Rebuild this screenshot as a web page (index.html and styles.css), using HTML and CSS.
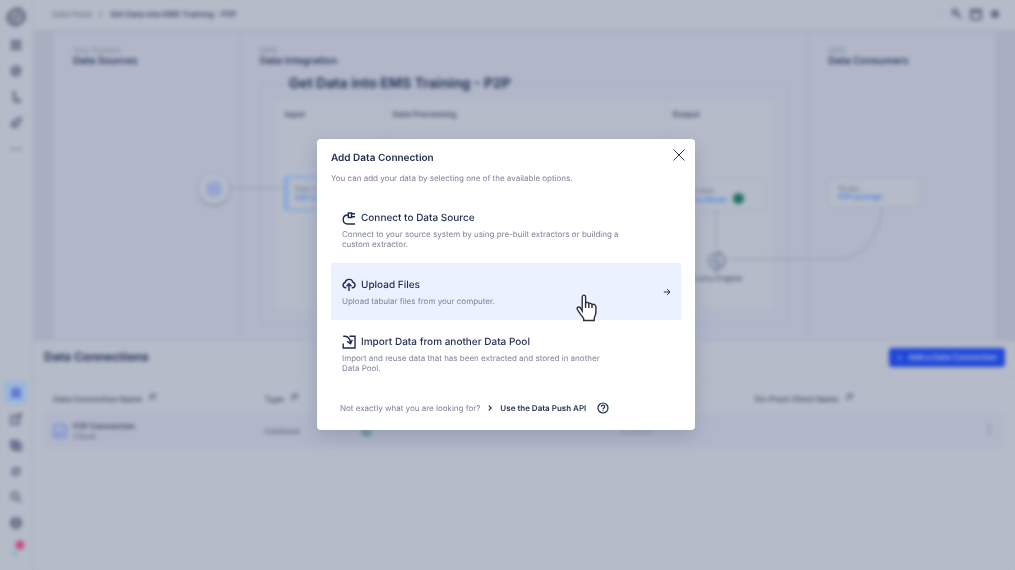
FILE: index.html
```html
<!DOCTYPE html>
<html lang="en">
<head>
<meta charset="utf-8">
<meta name="viewport" content="width=device-width, initial-scale=1">
<title>Add Data Connection</title>
<link rel="stylesheet" href="styles.css">
</head>
<body>
<div class="app" inert>
  <nav class="sidebar" aria-label="Main">
    <a class="logo" href="#" aria-label="Home"><svg viewBox="0 0 20 20" width="20" height="20"><circle cx="11.500" cy="9" r="7.500"/><circle cx="9" cy="11" r="7.500"/><circle cx="10" cy="10" r="2"/></svg></a>
    <a class="nav-item" href="#" aria-label="Apps"><svg viewBox="0 0 12 12" class="solid"><path d="M1 1h4.600v4.600H1zM6.400 1H11v4.600H6.400zM1 6.400h4.600V11H1zM6.400 6.400H11V11H6.400z"/></svg></a>
    <a class="nav-item" href="#" aria-label="Explore"><svg viewBox="0 0 12 12"><circle cx="6" cy="6" r="4.500"/><path d="M4 8l1-3 3-1-1 3z"/></svg></a>
    <a class="nav-item" href="#" aria-label="Process"><svg viewBox="0 0 12 12"><path d="M4 1v9h5L6 6"/><circle cx="4" cy="2" r="1"/><circle cx="9" cy="10" r="1"/></svg></a>
    <a class="nav-item" href="#" aria-label="Launch"><svg viewBox="0 0 12 12"><path d="M11 1L7 2 2 6l4 4 4-5zM4 7l-3 4M3 5l4 4"/></svg></a>
    <a class="nav-item" href="#" aria-label="More"><svg viewBox="0 0 12 12"><path d="M1 6h2M5 6h2M9 6h2"/></svg></a>
    <span class="spacer"></span>
    <a class="nav-item active" href="#" aria-label="Data"><svg viewBox="0 0 12 12" class="solid"><ellipse cx="6" cy="2.500" rx="5" ry="2"/><path d="M1 3.500h10V11H1z"/></svg></a>
    <a class="nav-item" href="#" aria-label="Edit"><svg viewBox="0 0 12 12"><path d="M7 3H1v8h8V6M5 7l5-5"/><circle cx="10" cy="2" r="1.500"/></svg></a>
    <a class="nav-item" href="#" aria-label="Packages"><svg viewBox="0 0 12 12"><path d="M1 2h7v7H1zM4 5h7v6H4zM1 4h7M6 7v2"/></svg></a>
    <a class="nav-item" href="#" aria-label="Transfers"><svg viewBox="0 0 12 12"><path d="M3 9V4h6L7 2M9 3v6H3l2 2"/></svg></a>
    <a class="nav-item" href="#" aria-label="Search"><svg viewBox="0 0 12 12"><circle cx="5" cy="5" r="3.500"/><path d="M8 8l3 3"/></svg></a>
    <a class="nav-item" href="#" aria-label="Help"><svg viewBox="0 0 12 12" class="solid"><path d="M6 0a6 6 0 100 12A6 6 0 006 0zm-1 3h2v3H5zm0 4h2v2H5z"/></svg></a>
    <a class="nav-item profile" href="#" aria-label="Profile"><svg viewBox="0 0 16 20"><circle class="alert" cx="12" cy="6" r="4.500"/><path class="user" d="M7 12v3M5 14l3 3"/></svg></a>
  </nav>
  <div class="main">
    <header class="topbar">
      <div class="crumbs"><a href="#">Data Pools</a><svg viewBox="0 0 6 8" width="6" height="8"><path d="M1 1l3 3-3 3"/></svg><strong>Get Data into EMS Training - P2P</strong></div>
      <div class="tools">
        <button aria-label="Key"><svg viewBox="0 0 12 12"><circle cx="4" cy="4" r="2.500"/><path d="M6 6l4 4M9 7l-1 1"/></svg></button>
        <button aria-label="Schedule"><svg viewBox="0 0 12 12"><path d="M1 2h10v9H1zM1 4h10"/></svg></button>
        <button aria-label="Settings"><svg viewBox="0 0 12 12"><circle cx="6" cy="6" r="3"/><path d="M6 2v8M2 6h8"/></svg></button>
      </div>
    </header>
    <section class="canvas" aria-label="Data flow">
      <div class="stage">
        <div class="lane"><small>Your System</small><h3>Data Sources</h3></div>
        <div class="lane"><small>EMS</small><h3>Data Integration</h3>
          <fieldset class="pool"><legend>Get Data into EMS Training - P2P</legend>
            <div class="steps"><h4>Input</h4><h4>Data Processing</h4><h4>Output</h4></div>
          </fieldset>
        </div>
        <div class="lane"><small>EMS</small><h3>Data Consumers</h3></div>
        <svg class="links" viewBox="0 0 942 310" width="942" height="310"><circle cx="663" cy="231" r="48" class="halo"/><path d="M175 158h55M662 180v38M675 229h106c30 0 45-25 47-53"/><circle cx="175" cy="158" r="1"/><circle cx="662" cy="181" r="1"/><circle cx="828" cy="176" r="1"/><g class="engine"><circle cx="663" cy="231" r="8"/><path d="M666 221l-6 11h6l-5 10"/></g></svg>
        <div class="node source"><svg viewBox="0 0 14 14" width="14" height="14"><rect x="1" y="1" width="12" height="12" rx="4"/><path d="M4 5h6v4H4z"/></svg></div>
        <div class="node input"><span>Data Connections</span><a href="#">P2P Connection</a></div>
        <div class="node output"><div><span>Data Models</span><a href="#">P2P Data Model</a></div><i class="dot"></i></div>
        <div class="node engine-name">Query Engine</div>
        <div class="node studio"><span>Studio</span><a href="#">P2P package</a></div>
      </div>
    </section>
    <section class="panel">
      <header class="panel-head"><h2>Data Connections</h2><button class="add"><span>+</span>Add a Data Connection</button></header>
      <table>
        <colgroup><col class="c-name"><col class="c-type"><col class="c-state"><col class="c-kind"><col></colgroup>
        <thead><tr>
          <th>Data Connection Name <svg viewBox="0 0 8 8"><path d="M2 7V2h5M5 6V2"/></svg></th>
          <th>Type <svg viewBox="0 0 8 8"><path d="M2 7V2h5M5 6V2"/></svg></th><th></th><th></th>
          <th>On-Prem Client Name <svg viewBox="0 0 8 8"><path d="M2 7V2h5M5 6V2"/></svg></th>
        </tr></thead>
        <tbody><tr>
          <td><div class="conn"><svg viewBox="0 0 14 14"><rect x="1" y="1" width="12" height="12" rx="2"/><path d="M4 8l2 2 4-4"/></svg><div><strong>P2P Connection</strong><span>Cloud</span></div></div></td>
          <td>Database</td><td><i class="dot"></i></td><td>Available</td>
          <td class="end"><button aria-label="Row actions">⋮</button></td>
        </tr></tbody>
      </table>
    </section>
  </div>
</div>

<div class="overlay">
  <div class="modal" role="dialog" aria-modal="true" aria-labelledby="dlg-title">
    <button class="close" aria-label="Close"><svg viewBox="0 0 12 12" width="12" height="12"><path d="M.5.500l11 11M11.500.500l-11 11"/></svg></button>
    <h1 id="dlg-title">Add Data Connection</h1>
    <p class="intro">You can add your data by selecting one of the available options.</p>
    <button class="option">
      <span class="option-title"><svg viewBox="0 0 14 14"><path d="M5 4C2.800 4.300 1.200 6 1.200 8.500c0 2.700 1.800 4.500 4.300 4.500H13M4.800 4h1.500M6.300 2v4.500h3.200V2zM9.500 2.800H13M9.500 5.700H13"/></svg>Connect to Data Source</span>
      <span class="option-text">Connect to your source system by using pre-built extractors or building a custom extractor.</span>
    </button>
    <button class="option hovered">
      <span class="option-title"><svg viewBox="0 0 14 14"><path d="M4.300 9.800H3.500a2.700 2.700 0 01-.4-5.300A4.100 4.100 0 0111 4.300a2.800 2.800 0 01-.5 5.500h-.8M7 13V6M4.500 8.200L7 5.700l2.500 2.500"/></svg>Upload Files</span>
      <span class="option-text">Upload tabular files from your computer.</span>
      <svg class="arrow" viewBox="0 0 8 8" width="8" height="8"><path d="M.8 4h6M4.200 1.200L7 4 4.200 6.800"/></svg>
      <svg class="pointer" viewBox="0 0 21 28" width="21" height="28"><path d="M6.200 17V3.200c0-2.800 3.400-2.800 3.400 0v6c.8-1.300 2.800-1 3.200.6 1-1 2.800-.6 3.200.9 1.500-.9 3.900 0 3.900 2.300v5.500c0 2.300-1.600 4-1.700 6.200v1.800H7.700v-1.800C5.800 21.500 3 19 1.300 15.300c-.8-2 1.700-3 3.100-1.400z"/><path d="M9.600 9v5M12.800 9.800V14M16 10.700V14"/></svg>
    </button>
    <button class="option">
      <span class="option-title"><svg viewBox="0 0 14 14"><path d="M7.500 1.200H13V13H1.200V8.500M1.200 1.200H3c3 0 5 3 5.500 6.800M5 6.200l3.500 2.500 1.800-3.800"/></svg>Import Data from another Data Pool</span>
      <span class="option-text">Import and reuse data that has been extracted and stored in another Data&nbsp;Pool.</span>
    </button>
    <footer class="foot">
      <span>Not exactly what you are looking for?</span>
      <svg viewBox="0 0 4 6" width="4" height="6"><path d="M.7.600L3.200 3 .7 5.400"/></svg>
      <a href="#">Use the Data Push API</a>
      <button class="help" aria-label="Help"><svg viewBox="0 0 12 12" width="12" height="12"><circle cx="6" cy="6" r="5"/><path d="M4.300 4.800c0-2.200 3.400-2.200 3.400 0C7.700 5.900 6 5.900 6 7.200M6 8.200v1"/></svg></button>
    </footer>
  </div>
</div>
</body>
</html>
```
FILE: styles.css
```css
:root {
  --surface: #b5bbc8;
  --lane: #b1b7c9;
  --ground: #a9afc0;
  --line: #a7adbe;
  --ink: #2c3a5c;
  --navy: #1e2b50;
  --muted: #7c8298;
  --link: #3f7fe0;
}
* { box-sizing: border-box; }
body { margin: 0; background: var(--surface); color: var(--ink); font-family: Inter, "Liberation Sans", sans-serif; font-size: 8px; line-height: 10px; text-rendering: geometricPrecision; }
h1, h2, h3, h4, p { margin: 0; }
button { padding: 0; border: 0; background: none; color: inherit; font: inherit; text-rendering: inherit; cursor: pointer; }
a { color: inherit; text-decoration: none; }
svg { display: block; flex: none; fill: none; stroke: currentColor; }

.app { display: flex; min-height: 100vh; }
.sidebar { display: flex; flex-direction: column; align-items: center; gap: 3px; width: 34px; padding: 7px 1px 10px 0; border-right: 2px solid #afb5c5; }
.logo { margin-bottom: 3px; color: #5a647b; }
.logo svg { stroke-width: 2; }
.nav-item { display: grid; place-items: center; width: 23px; height: 23px; border-radius: 4px; color: #606b86; }
.nav-item svg { width: 12px; height: 12px; stroke-width: 2; }
.solid { fill: currentColor; fill-rule: evenodd; stroke: none; }
.active { background: #9db6dc; color: #5e7cd0; }
.spacer { flex: 1; }
.nav-item.profile svg { width: 16px; height: 20px; }
.alert { fill: #c8477f; stroke: none; }
.user { stroke: #62b1cf; stroke-width: 2; }

.main { display: flex; flex: 1; flex-direction: column; min-width: 0; }
.topbar { display: flex; align-items: center; justify-content: space-between; height: 30px; padding: 0 14px 2px 18px; }
.crumbs { display: flex; align-items: center; gap: 6px; color: #5c667f; }
.crumbs strong { color: #3c4968; font-weight: 600; }
.tools { display: flex; gap: 7px; padding-left: 10px; border-left: 1px solid var(--line); color: #5c6782; }
.tools svg { width: 12px; height: 12px; stroke-width: 2; }

.canvas { padding: 0 20px; border-top: 2px solid var(--line); border-bottom: 1px solid var(--line); background: var(--ground); }
.stage { position: relative; display: grid; grid-template-columns: 186fr 569fr 187fr; min-height: 308px; background: var(--lane); }
.lane { display: flex; flex-direction: column; padding: 13px 19px 15px; }
.lane + .lane { border-left: 1px dashed #9fa6b9; }
.lane small { font-size: 8px; color: #7d8598; }
.lane h3 { font-size: 10px; font-weight: 600; line-height: 12px; }
.pool { display: flex; flex: 1; min-width: 0; margin: 8px 0 0; padding: 8px 15px 15px; border: 1px dashed #9fa6b9; border-radius: 4px; }
.pool legend { margin-left: 9px; padding: 0 4px; font-size: 14px; font-weight: 700; line-height: 18px; }
.steps { display: grid; grid-template-columns: 110fr 280fr 108fr; height: 100%; width: 100%; background: var(--surface); }
.steps h4 { padding: 8px 6px; font-size: 8px; color: #4c5874; }
.steps h4 + h4 { border-left: 1px solid #adb3c3; }
.steps h4:first-child { padding-left: 9px; }

.links { position: absolute; top: -2px; left: 0; stroke: #8b93a9; }
.links .halo { stroke: #adb3c2; }
.links .engine { stroke: #75809a; stroke-width: 2; }
.node { position: absolute; color: #646e86; font-size: 7px; line-height: 9px; white-space: nowrap; }
.node span, .node a { display: block; }
.node a { color: var(--link); font-weight: 600; }
.source { display: grid; place-items: center; top: 142px; left: 145px; width: 30px; height: 30px; border-radius: 50%; background: var(--surface); box-shadow: 0 2px 4px #8e95ab; color: #8495d8; }
.source svg { stroke-width: 2; }
.input { top: 144px; left: 230px; width: 88px; padding: 6px 7px; height: 35px; border: 2px solid #7fa5e0; border-left-width: 4px; border-radius: 4px; background: var(--surface); }
.output { display: flex; align-items: center; gap: 4px; top: 146px; left: 610px; width: 102px; height: 33px; padding: 0 8px; border: 1px solid #a7adbd; border-radius: 3px; background: var(--surface); }
.output .dot { margin-top: 8px; }
.output div { min-width: 56px; }
.dot { display: block; width: 11px; height: 11px; border-radius: 50%; background: #1d7064; }
.engine-name { top: 242px; left: 636px; color: #55617c; font-size: 8px; font-weight: 600; }
.studio { top: 146px; left: 774px; width: 92px; padding: 6px 9px; height: 29px; border: 1px solid #a7adbd; border-radius: 3px; background: var(--surface); line-height: 8px; }

.panel { flex: 1; }
.panel-head { display: flex; align-items: center; justify-content: space-between; height: 37px; padding: 0 10px 4px; border-bottom: 1px solid #adb3c3; }
.panel h2 { font-size: 12px; line-height: 16px; }
.add { display: flex; align-items: center; gap: 6px; height: 19px; padding: 0 8px; border-radius: 3px; background: #2047d8; color: #a9bbeb; font-size: 8px; font-weight: 600; }
table { width: calc(100% - 20px); margin: 9px 10px 0; border-collapse: collapse; table-layout: fixed; color: #59637d; }
.c-name { width: 22%; }
.c-type { width: 10%; }
.c-state { width: 27%; }
.c-kind { width: 14%; }
th, td { padding: 0 9px; text-align: left; }
th { height: 26px; padding-bottom: 4px; color: #4c5874; font-weight: 600; }
th svg { display: inline-block; width: 10px; height: 10px; margin-left: 4px; }
tbody tr { height: 35px; background: var(--lane); }
.conn { display: flex; align-items: center; gap: 6px; }
.conn > svg { width: 14px; height: 14px; color: #7189d6; stroke-width: 2; }
.conn strong, .conn span { display: block; }
.conn strong { color: #3c4968; font-weight: 600; }
.end { text-align: right; }
.end button { font-size: 14px; }

.overlay { position: fixed; inset: 0; display: grid; place-items: center; padding: 0 3px 1px 0; backdrop-filter: blur(2px); }
.modal { position: relative; width: 378px; max-width: 100%; padding: 12px 14px 14px; border-radius: 4px; background: #fff; box-shadow: 0 6px 18px #979eb4; color: var(--navy); }
.close { position: absolute; top: 10px; right: 10px; color: #323b52; }
.modal h1 { font-size: 10px; font-weight: 600; line-height: 14px; }
.intro { margin: 8px 0 13px; color: var(--muted); }
.option { position: relative; display: block; width: 100%; padding: 15px 60px 14px 11px; text-align: left; }
.hovered { background: #ebf1fe; }
.option-title { display: flex; align-items: center; gap: 5px; font-size: 10px; font-weight: 500; line-height: 14px; }
.option-title svg { width: 14px; height: 14px; stroke-width: 1.4; }
.option-text { display: block; margin-top: 4px; color: var(--muted); }
.arrow { position: absolute; top: calc(50% - 4px); right: 10px; }
.pointer { position: absolute; top: 31px; right: 84px; fill: #fff; stroke: #2c303b; stroke-width: 1.4; }
.foot { display: flex; align-items: center; min-height: 16px; margin-top: 13px; padding-left: 9px; color: var(--muted); }
.foot > svg { margin: 0 8px; color: var(--navy); stroke-width: 1.2; }
.foot a { color: var(--navy); font-weight: 600; }
.help { margin-left: 11px; color: var(--navy); }
.help svg { stroke-width: 1.2; }
```
